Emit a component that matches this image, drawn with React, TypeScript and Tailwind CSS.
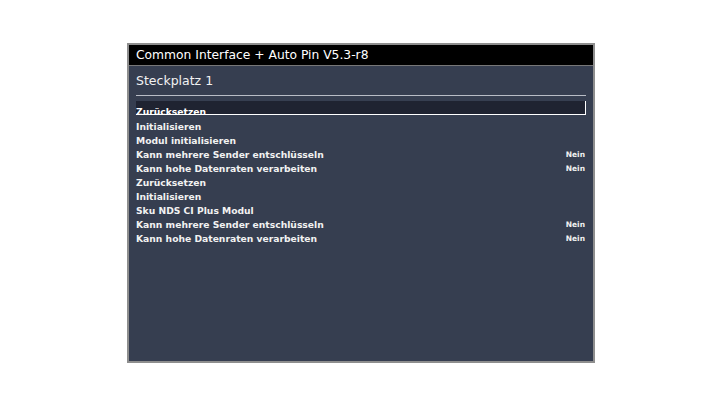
import React from "react";

const rows: { label: string; value?: string }[] = [
  { label: "Zurücksetzen" },
  { label: "Initialisieren" },
  { label: "Modul initialisieren" },
  { label: "Kann mehrere Sender entschlüsseln", value: "Nein" },
  { label: "Kann hohe Datenraten verarbeiten", value: "Nein" },
  { label: "Zurücksetzen" },
  { label: "Initialisieren" },
  { label: "Sku NDS CI Plus Modul" },
  { label: "Kann mehrere Sender entschlüsseln", value: "Nein" },
  { label: "Kann hohe Datenraten verarbeiten", value: "Nein" },
];

export default function App() {
  return (
    <div className="w-[720px] h-[405px] bg-white pt-[43px] pl-[127px]" style={{ fontFamily: '"DejaVu Sans", sans-serif' }}>
      <div className="w-[468px] h-[320px] border-2 border-[#8e8e8e] flex flex-col bg-[#363e50]">
        <div className="h-[21px] bg-black border-b border-[#777] flex items-center pl-[7px] text-[12.3px] text-white leading-none">
          Common Interface + Auto Pin V5.3-r8
        </div>
        <div className="flex flex-col px-[7px]">
          <div className="h-[30px] flex items-center pt-[1px] text-[12.5px] text-[#f2f2f2] border-b border-[#b9bdc6] leading-none">
            Steckplatz 1
          </div>
          <div className="flex flex-col mt-[5px]">
            {rows.map((r, i) =>
              i === 0 ? (
                <div
                  key={i}
                  className="h-[14px] mb-[5px] flex items-end justify-between text-[9.2px] font-bold text-white bg-[#1f2331] border-r border-b border-white leading-none"
                >
                  <span className="relative top-[2px]">{r.label}</span>
                </div>
              ) : (
                <div
                  key={i}
                  className="h-[14px] flex items-center justify-between text-[9.2px] font-bold text-[#f2f2f2] leading-none"
                >
                  <span>{r.label}</span>
                  {r.value && <span className="text-[7.5px] pr-[1px]">{r.value}</span>}
                </div>
              )
            )}
          </div>
        </div>
      </div>
    </div>
  );
}
